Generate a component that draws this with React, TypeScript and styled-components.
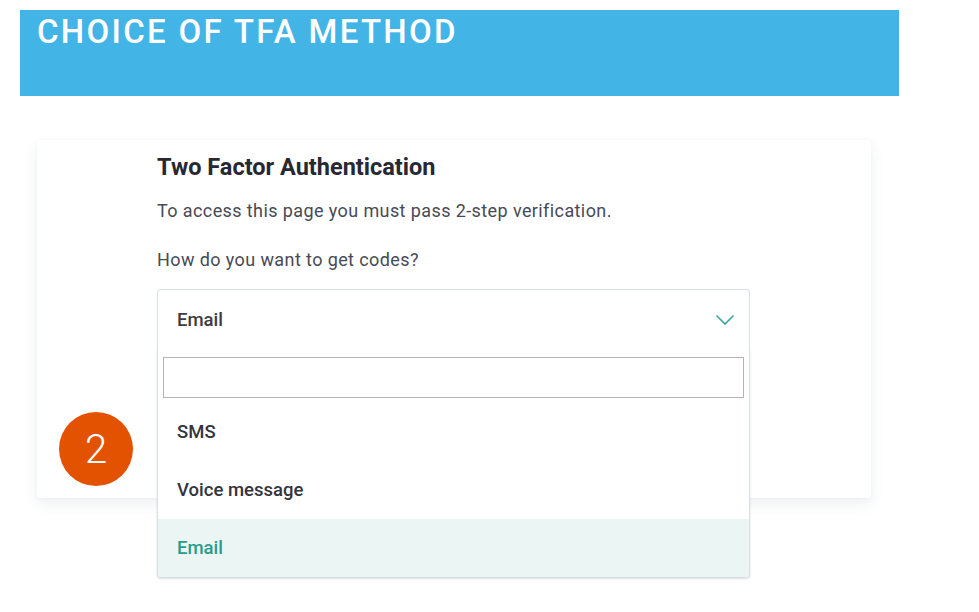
import React from "react";
import styled, { createGlobalStyle } from "styled-components";

const Global = createGlobalStyle`
  html, body { margin: 0; padding: 0; background: #ffffff; }
  body { font-family: Roboto, "Noto Sans", sans-serif; }
  * { box-sizing: border-box; }
`;

const Page = styled.div`
  position: relative;
  width: 979px;
  height: 612px;
  padding: 10px 80px 0 20px;
  overflow: hidden;
`;

const Banner = styled.header`
  height: 86px;
  background: #42b4e6;
  padding: 0 0 0 17px;
`;

const BannerTitle = styled.h1`
  margin: 0;
  color: #ffffff;
  font-family: Roboto, sans-serif;
  font-weight: 500;
  font-size: 33px;
  line-height: 40px;
  letter-spacing: 2.3px;
  transform: translateY(2px);
`;

const Card = styled.section`
  margin: 44px 28px 0 17px;
  height: 358px;
  background: #ffffff;
  box-shadow: 0 6px 14px rgba(40, 60, 90, 0.08), 0 0 3px rgba(40, 60, 90, 0.04);
  border-radius: 3px;
  padding: 13px 0 0 120px;
`;

const Heading = styled.h2`
  margin: 0;
  font-family: Roboto, sans-serif;
  font-weight: 700;
  font-size: 23.5px;
  line-height: 28px;
  color: #272833;
`;

const Text = styled.p`
  margin: 19px 0 0;
  font-family: Roboto, sans-serif;
  font-size: 18px;
  letter-spacing: 0.4px;
  line-height: 22px;
  color: #484a55;
`;

const Question = styled(Text)`
  margin-top: 27px;
`;

const Select = styled.div`
  position: relative;
  margin-top: 18px;
  width: 593px;
`;

const SelectHead = styled.div`
  height: 60px;
  border: 1px solid #d9dee4;
  border-bottom: none;
  border-radius: 4px 4px 0 0;
  display: flex;
  align-items: center;
  justify-content: space-between;
  padding: 0 14px 0 19px;
  font-family: Roboto, sans-serif;
  font-size: 18.5px;
  font-weight: 500;
  color: #3c3c44;
`;

const Menu = styled.div`
  position: absolute;
  top: 60px;
  left: 0;
  right: 0;
  background: #ffffff;
  border: 1px solid #d9dee4;
  border-top: none;
  border-radius: 0 0 4px 4px;
  box-shadow: 0 1px 2px rgba(60, 80, 100, 0.18);
  z-index: 2;
  overflow: hidden;
`;

const Search = styled.input`
  display: block;
  margin: 8px 5px 0 5px;
  width: calc(100% - 10px);
  height: 41px;
  border: 1px solid #b4b4b4;
  background: #fff;
  outline: none;
`;

const Option = styled.div<{ $active?: boolean }>`
  height: 58px;
  display: flex;
  align-items: center;
  padding: 0 19px;
  font-family: Roboto, sans-serif;
  font-size: 18.5px;
  font-weight: 500;
  color: ${(p) => (p.$active ? "#2a9c8e" : "#33343c")};
  background: ${(p) => (p.$active ? "#ebf5f3" : "transparent")};
`;

const Options = styled.div`
  margin-top: 5px;
`;

const Badge = styled.div`
  position: absolute;
  left: 59px;
  top: 412px;
  width: 74px;
  height: 74px;
  border-radius: 50%;
  background: #e35200;
  color: #ffffff;
  display: flex;
  align-items: center;
  justify-content: center;
  font-family: Roboto, sans-serif;
  font-weight: 300;
  font-size: 40px;
  z-index: 3;
`;

const Chevron = () => (
  <svg width="20" height="12" viewBox="0 0 20 12" fill="none">
    <path d="M1.5 1.5 L10 10 L18.5 1.5" stroke="#3aab9a" strokeWidth="1.6" />
  </svg>
);

export default function App() {
  return (
    <>
      <Global />
      <Page>
        <Banner>
          <BannerTitle>CHOICE OF TFA METHOD</BannerTitle>
        </Banner>
        <Card>
          <Heading>Two Factor Authentication</Heading>
          <Text>To access this page you must pass 2-step verification.</Text>
          <Question>How do you want to get codes?</Question>
          <Select>
            <SelectHead>
              <span>Email</span>
              <Chevron />
            </SelectHead>
            <Menu>
              <Search />
              <Options>
                <Option>SMS</Option>
                <Option>Voice message</Option>
                <Option $active>Email</Option>
              </Options>
            </Menu>
          </Select>
        </Card>
        <Badge>2</Badge>
      </Page>
    </>
  );
}
